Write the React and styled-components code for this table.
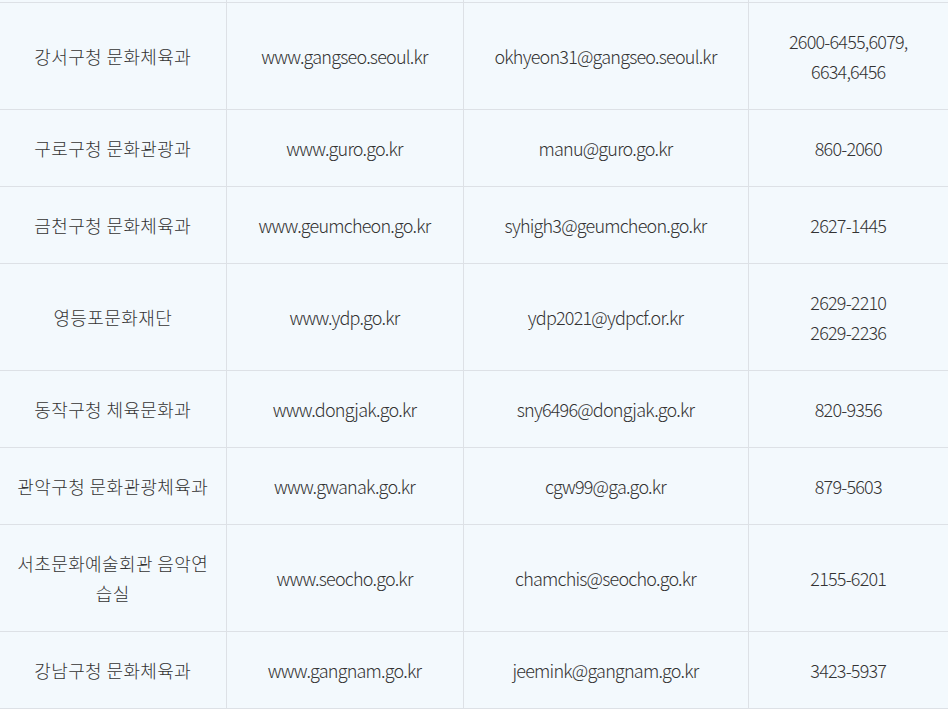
import React from "react";
import styled, { createGlobalStyle } from "styled-components";

const Global = createGlobalStyle`
  html, body { margin: 0; padding: 0; background: #ffffff; }
  body { font-family: "Noto Sans CJK KR", "Noto Sans", sans-serif; }
`;

const Wrap = styled.div`
  width: 950px;
  height: 710px;
  overflow: hidden;
  background: #ffffff;
`;

const Table = styled.table`
  width: 948px;
  border-collapse: collapse;
  table-layout: fixed;
  background: #f3f9fd;
  color: #333;
  font-family: "Noto Sans CJK KR", "Noto Sans", sans-serif;
  font-weight: 300;
  font-size: 18px;
`;

const Cell = styled.td`
  border: 1px solid #dde1e6;
  border-left: ${(p) => (p.$first ? "none" : "1px solid #dde1e6")};
  border-right: ${(p) => (p.$last ? "none" : "1px solid #dde1e6")};
  text-align: center;
  vertical-align: middle;
  padding: 23px 12px;
  line-height: 30px;
  letter-spacing: ${(p) => (p.$korean ? "0.4px" : "-0.8px")};
  word-break: normal;
`;

const SpacerCell = styled.td`
  height: 2px;
  padding: 0;
  border-left: ${(p) => (p.$first ? "none" : "1px solid #dde1e6")};
  border-right: ${(p) => (p.$last ? "none" : "1px solid #dde1e6")};
  border-bottom: 1px solid #dde1e6;
  font-size: 0;
  line-height: 0;
`;

const rows = [
  ["강서구청 문화체육과", "www.gangseo.seoul.kr", "okhyeon31@gangseo.seoul.kr", ["2600-6455,6079,", "6634,6456"]],
  ["구로구청 문화관광과", "www.guro.go.kr", "manu@guro.go.kr", ["860-2060"]],
  ["금천구청 문화체육과", "www.geumcheon.go.kr", "syhigh3@geumcheon.go.kr", ["2627-1445"]],
  ["영등포문화재단", "www.ydp.go.kr", "ydp2021@ydpcf.or.kr", ["2629-2210", "2629-2236"]],
  ["동작구청 체육문화과", "www.dongjak.go.kr", "sny6496@dongjak.go.kr", ["820-9356"]],
  ["관악구청 문화관광체육과", "www.gwanak.go.kr", "cgw99@ga.go.kr", ["879-5603"]],
  ["서초문화예술회관 음악연습실", "www.seocho.go.kr", "chamchis@seocho.go.kr", ["2155-6201"]],
  ["강남구청 문화체육과", "www.gangnam.go.kr", "jeemink@gangnam.go.kr", ["3423-5937"]],
];

const widths = [226, 237, 285, 200];

export default function App() {
  return (
    <>
      <Global />
      <Wrap>
        <Table>
          <colgroup>
            {widths.map((w, i) => (
              <col key={i} style={{ width: w }} />
            ))}
          </colgroup>
          <tbody>
            <tr>
              {widths.map((_, i) => (
                <SpacerCell key={i} $first={i === 0} $last={i === 3} />
              ))}
            </tr>
            {rows.map((r, i) => (
              <tr key={i}>
                <Cell $first $korean>{r[0]}</Cell>
                <Cell>{r[1]}</Cell>
                <Cell>{r[2]}</Cell>
                <Cell $last>
                  {r[3].map((l, j) => (
                    <React.Fragment key={j}>
                      {j > 0 && <br />}
                      {l}
                    </React.Fragment>
                  ))}
                </Cell>
              </tr>
            ))}
          </tbody>
        </Table>
      </Wrap>
    </>
  );
}
